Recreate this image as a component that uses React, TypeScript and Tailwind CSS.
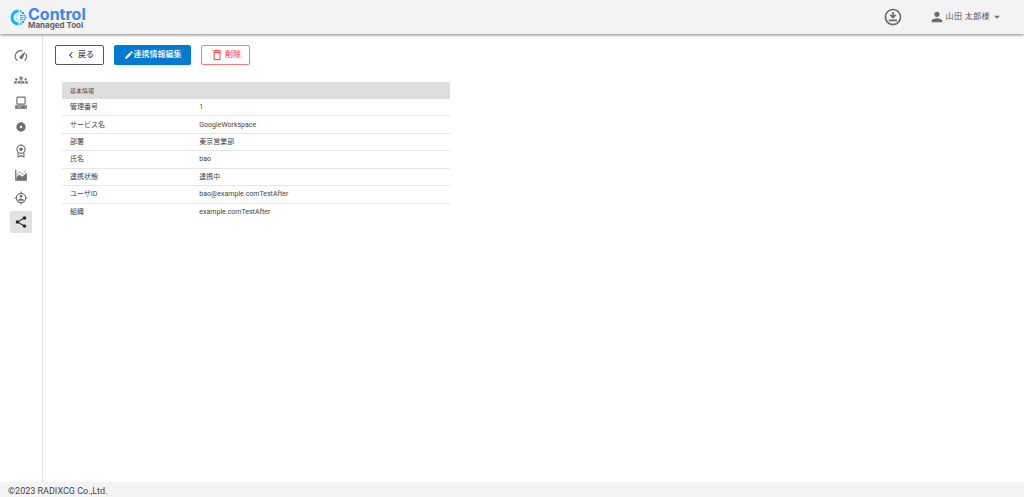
import type { ReactNode } from "react";
import {
  MdArrowDropDown,
  MdChevronLeft,
  MdDeleteOutline,
  MdEdit,
  MdOutlineDownloadForOffline,
  MdOutlineGroups,
  MdPerson,
  MdShare,
} from "react-icons/md";

const Svg = ({ children }: { children: ReactNode }) => (
  <svg viewBox="0 0 24 24" className="size-3.5" fill="none" stroke="currentColor" strokeWidth="2">
    {children}
  </svg>
);

const GaugeIcon = () => (
  <Svg>
    <path d="M6 20a9.500 9.500 0 0 1 9-16.500M20 8a9.500 9.500 0 0 1-2 12" />
    <path d="M20 4l-5 12a3 3 0 1 1-5-3.500z" fill="currentColor" stroke="none" />
  </Svg>
);

const ComputerIcon = () => (
  <Svg>
    <rect x="5" y="2" width="14" height="12" rx="1" />
    <path d="M2 16h20v6H2z" fill="currentColor" stroke="none" />
    <path d="M5 19h8M18 19h2" stroke="white" strokeWidth="1" />
  </Svg>
);

const DiscIcon = () => (
  <Svg>
    <path
      fill="currentColor"
      stroke="none"
      fillRule="evenodd"
      d="M12 4a8 8 0 1 0 0 16 8 8 0 0 0 0-16zm0 6a2 2 0 1 1 0 4 2 2 0 0 1 0-4z"
    />
  </Svg>
);

const LicenseIcon = () => (
  <Svg>
    <circle cx="12" cy="9" r="7" />
    <circle cx="12" cy="9" r="3" fill="currentColor" stroke="none" />
    <path d="M7 15v7l5-2 5 2v-7" />
  </Svg>
);

const ChartIcon = () => (
  <Svg>
    <path d="M3 3v18h19" />
    <path d="M4 21v-5l5-5 5 4 8-7v13z" fill="currentColor" stroke="none" />
    <path d="M4 13l5-7 5 5 7-7" strokeWidth="1" />
  </Svg>
);

const AccountTargetIcon = () => (
  <Svg>
    <circle cx="12" cy="12" r="8" />
    <path d="M12 1v4M12 19v4M1 12h4M19 12h4" />
    <path
      d="M12 6.500a2.500 2.500 0 1 1 0 5 2.500 2.500 0 0 1 0-5zM7 16.500c0-2 2.500-3.500 5-3.500s5 1.500 5 3.500z"
      fill="currentColor"
      stroke="none"
    />
  </Svg>
);

const LogoMark = () => (
  <svg viewBox="0 0 34 34" className="size-[17px]" fill="none">
    <path d="M17 4a13 13 0 0 0 0 26" stroke="#12b5f5" strokeWidth="6" />
    <path d="M18 11a6 6 0 0 0 0 12" stroke="#8ee0fb" strokeWidth="2" />
    <path d="M20 5l4 3M20 29l4-3M22 13h5M22 21h5M20 17h9" stroke="#4fcaf7" strokeWidth="2" />
    <g fill="#1bb4f3">
      <circle cx="21" cy="4" r="2" />
      <circle cx="26" cy="8" r="2.500" />
      <circle cx="29" cy="13" r="2" />
      <circle cx="31" cy="17" r="2" />
      <circle cx="29" cy="21" r="2" />
      <circle cx="26" cy="26" r="2.500" />
      <circle cx="21" cy="30" r="2" />
      <circle cx="22" cy="13" r="2" />
      <circle cx="22" cy="21" r="2" />
    </g>
  </svg>
);

const navItems = [
  { label: "ダッシュボード", icon: <GaugeIcon /> },
  { label: "従業員", icon: <MdOutlineGroups className="size-3.5" /> },
  { label: "デバイス", icon: <ComputerIcon /> },
  { label: "ソフトウェア", icon: <DiscIcon /> },
  { label: "ライセンス", icon: <LicenseIcon /> },
  { label: "レポート", icon: <ChartIcon /> },
  { label: "アカウント", icon: <AccountTargetIcon /> },
  { label: "連携", icon: <MdShare className="size-3.5" />, active: true },
];

const rows = [
  ["管理番号", "1"],
  ["サービス名", "GoogleWorkspace"],
  ["部署", "東京営業部"],
  ["氏名", "bao"],
  ["連携状態", "連携中"],
  ["ユーザID", "bao@example.comTestAfter"],
  ["組織", "example.comTestAfter"],
];

const Header = () => (
  <header className="relative z-10 flex h-[34px] items-center justify-between bg-[#f3f3f3] pr-5 pl-2.5 shadow-[0_1px_3px_rgba(0,0,0,0.5)]">
    <a href="#" className="flex items-center gap-px">
      <LogoMark />
      <span className="flex flex-col font-[Inter,sans-serif]">
        <span className="text-[16px] leading-4 font-bold text-[#4285e8]">Control</span>
        <span className="text-[8px] leading-[6px] font-bold text-[#5c666c]">Managed Tool</span>
      </span>
    </a>
    <div className="flex items-center gap-[26px] text-[#6b6b6b]">
      <button type="button" aria-label="ダウンロード">
        <MdOutlineDownloadForOffline className="size-5" />
      </button>
      <button type="button" className="flex items-center">
        <MdPerson className="size-4" />
        <span className="ml-px text-[8px] tracking-wider text-[#555]">山田 太郎様</span>
        <MdArrowDropDown className="size-3.5" />
      </button>
    </div>
  </header>
);

const Sidebar = () => (
  <nav className="w-[43px] shrink-0 border-r border-[#e4e4e4] px-2.5 pt-[11px]">
    <ul className="flex h-[188px] flex-col justify-between">
      {navItems.map((item) => (
        <li key={item.label}>
          <a
            href="#"
            aria-label={item.label}
            className={
              item.active
                ? "flex size-[22px] items-center justify-center rounded-xs bg-[#e2e2e2] text-[#222]"
                : "flex size-[22px] items-center justify-center text-[#707070]"
            }
          >
            {item.icon}
          </a>
        </li>
      ))}
    </ul>
  </nav>
);

const App = () => {
  return (
    <div className="flex min-h-screen flex-col bg-white font-[Roboto,'Noto_Sans_CJK_JP',sans-serif] text-[#444]">
      <Header />
      <div className="flex flex-1">
        <Sidebar />
        <main className="flex-1 px-3 pt-[11px]">
          <div className="flex gap-2.5 text-[8px] font-medium">
            <button
              type="button"
              className="flex h-5 w-[49px] items-center justify-center gap-px rounded-xs border border-[#555]"
            >
              <MdChevronLeft className="size-3" />
              戻る
            </button>
            <button
              type="button"
              className="flex h-5 w-[77px] items-center justify-center rounded-xs bg-[#0479d0] text-white shadow-sm"
            >
              <MdEdit className="size-2.5" />
              連携情報編集
            </button>
            <button
              type="button"
              className="flex h-5 w-[49px] items-center justify-center gap-px rounded-xs border border-[#f77] text-[#f55]"
            >
              <MdDeleteOutline className="size-3.5" />
              削除
            </button>
          </div>

          <table className="mt-[17px] ml-[7px] h-[138px] w-full max-w-[388px] table-fixed text-left text-[7px] leading-3">
            <colgroup>
              <col className="w-1/3" />
              <col />
            </colgroup>
            <thead>
              <tr className="h-[17px] bg-[#dedede]">
                <th colSpan={2} className="px-2 text-[6px] font-normal">
                  基本情報
                </th>
              </tr>
            </thead>
            <tbody>
              {rows.map(([label, value]) => (
                <tr key={label} className="border-b border-[#e6e6e6] last:border-b-0">
                  <th scope="row" className="px-2 font-normal">
                    {label}
                  </th>
                  <td className="px-2">{value}</td>
                </tr>
              ))}
            </tbody>
          </table>
        </main>
      </div>
      <footer className="flex h-[15px] items-center bg-[#f3f3f3] px-2 pt-1 text-[9px]">©2023 RADIXCG Co.,Ltd.</footer>
    </div>
  );
};

export default App;
